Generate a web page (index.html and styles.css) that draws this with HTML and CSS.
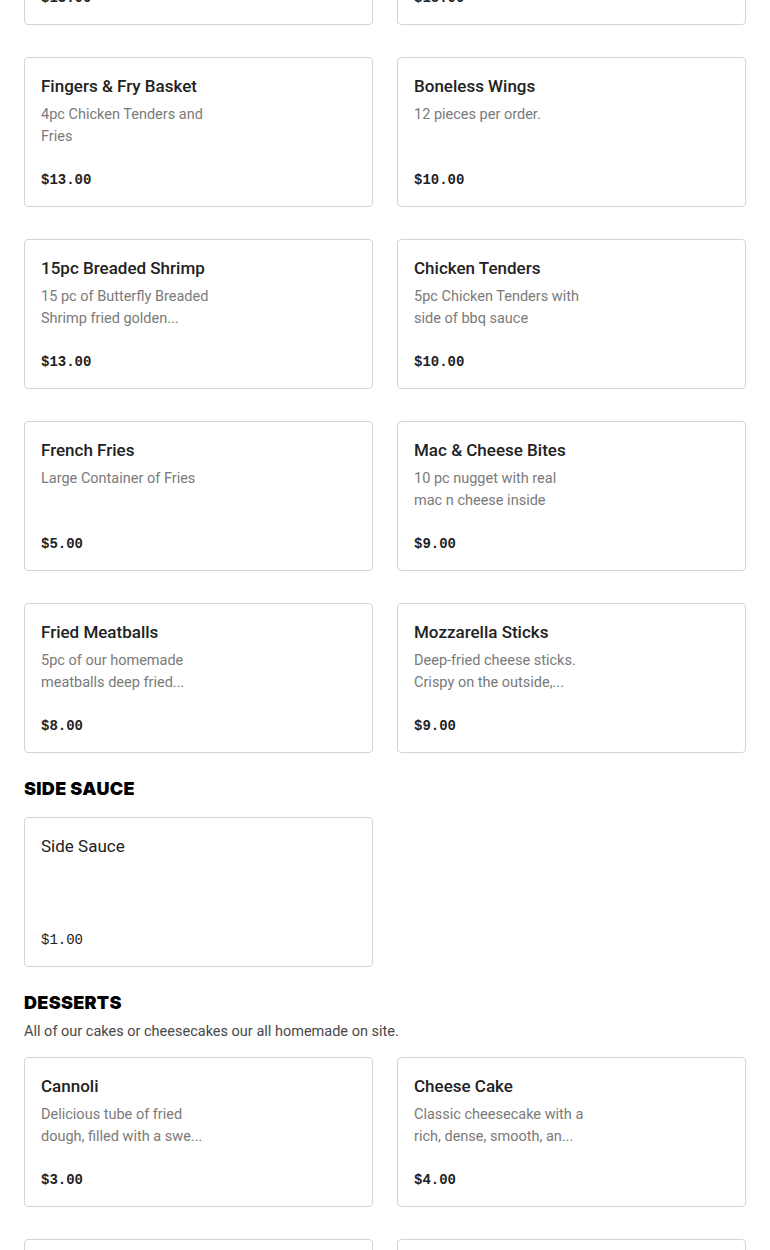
FILE: index.html
```html
<!DOCTYPE html>
<html lang="en">
<head>
<meta charset="utf-8">
<title>Menu</title>
<link rel="stylesheet" href="styles.css">
</head>
<body>
<main class="menu">
  <section class="section">
    <div class="grid">
      <article class="card">
        <h3 class="card-title">Chicken Wings</h3>
        <p class="card-desc">10 pieces per order with your choice of sauce.</p>
        <p class="card-price">$13.00</p>
      </article>
      <article class="card">
        <h3 class="card-title">Wings Basket</h3>
        <p class="card-desc">Wings and fries.</p>
        <p class="card-price">$15.00</p>
      </article>
      <article class="card">
        <h3 class="card-title">Fingers &amp; Fry Basket</h3>
        <p class="card-desc">4pc Chicken Tenders and Fries</p>
        <p class="card-price">$13.00</p>
      </article>
      <article class="card">
        <h3 class="card-title">Boneless Wings</h3>
        <p class="card-desc">12 pieces per order.</p>
        <p class="card-price">$10.00</p>
      </article>
      <article class="card">
        <h3 class="card-title">15pc Breaded Shrimp</h3>
        <p class="card-desc">15 pc of Butterfly Breaded Shrimp fried golden...</p>
        <p class="card-price">$13.00</p>
      </article>
      <article class="card">
        <h3 class="card-title">Chicken Tenders</h3>
        <p class="card-desc">5pc Chicken Tenders with side of bbq sauce</p>
        <p class="card-price">$10.00</p>
      </article>
      <article class="card">
        <h3 class="card-title">French Fries</h3>
        <p class="card-desc">Large Container of Fries</p>
        <p class="card-price">$5.00</p>
      </article>
      <article class="card">
        <h3 class="card-title">Mac &amp; Cheese Bites</h3>
        <p class="card-desc">10 pc nugget with real mac n cheese inside</p>
        <p class="card-price">$9.00</p>
      </article>
      <article class="card">
        <h3 class="card-title">Fried Meatballs</h3>
        <p class="card-desc">5pc of our homemade meatballs deep fried...</p>
        <p class="card-price">$8.00</p>
      </article>
      <article class="card">
        <h3 class="card-title">Mozzarella Sticks</h3>
        <p class="card-desc">Deep-fried cheese sticks. Crispy on the outside,...</p>
        <p class="card-price">$9.00</p>
      </article>
    </div>
  </section>

  <section class="section">
    <h2 class="section-title">SIDE SAUCE</h2>
    <div class="grid">
      <article class="card card-light">
        <h3 class="card-title">Side Sauce</h3>
        <p class="card-price">$1.00</p>
      </article>
    </div>
  </section>

  <section class="section">
    <h2 class="section-title">DESSERTS</h2>
    <p class="section-desc">All of our cakes or cheesecakes our all homemade on site.</p>
    <div class="grid">
      <article class="card">
        <h3 class="card-title">Cannoli</h3>
        <p class="card-desc">Delicious tube of fried dough, filled with a swe...</p>
        <p class="card-price">$3.00</p>
      </article>
      <article class="card">
        <h3 class="card-title">Cheese Cake</h3>
        <p class="card-desc">Classic cheesecake with a rich, dense, smooth, an...</p>
        <p class="card-price">$4.00</p>
      </article>
      <article class="card">
        <h3 class="card-title">Chocolate Cake</h3>
        <p class="card-desc">Rich chocolate layer cake.</p>
        <p class="card-price">$4.00</p>
      </article>
      <article class="card">
        <h3 class="card-title">Carrot Cake</h3>
        <p class="card-desc">Moist carrot cake with cream cheese frosting.</p>
        <p class="card-price">$4.00</p>
      </article>
    </div>
  </section>
</main>
</body>
</html>
```

FILE: styles.css
```css
* {
  box-sizing: border-box;
}

html, body {
  margin: 0;
  padding: 0;
  background: #ffffff;
}

body {
  font-family: Roboto, "Noto Sans", "Liberation Sans", sans-serif;
  color: #222222;
  overflow: hidden;
}

.menu {
  padding: 0 24px;
  margin-top: -125px;
}

.section {
  display: flex;
  flex-direction: column;
}

.section + .section {
  margin-top: 24px;
}

.section-title {
  margin: 0;
  font-family: Inter, "Liberation Sans", sans-serif;
  font-size: 18px;
  line-height: 24px;
  font-weight: 900;
  color: #000000;
  letter-spacing: 0.3px;
}

.section-desc {
  margin: 6px 0 0 0;
  font-size: 14.5px;
  line-height: 22px;
  color: #484848;
}

.section-title + .grid {
  margin-top: 16px;
}

.section-desc + .grid {
  margin-top: 14px;
}

.grid {
  display: grid;
  grid-template-columns: 1fr 1fr;
  column-gap: 24px;
  row-gap: 32px;
}

.card {
  height: 150px;
  border: 1px solid #d4d4d4;
  border-radius: 4px;
  padding: 16px;
  display: flex;
  flex-direction: column;
}

.card-title {
  margin: 0;
  font-size: 17px;
  line-height: 25px;
  font-weight: 500;
  color: #222222;
}

.card-light .card-title {
  font-weight: 400;
}

.card-desc {
  margin: 5px 0 0 0;
  max-width: 172px;
  font-size: 14.5px;
  line-height: 22px;
  color: #7a7a7a;
  display: -webkit-box;
  -webkit-line-clamp: 2;
  -webkit-box-orient: vertical;
  overflow: hidden;
}

.card-price {
  margin: auto 0 0 0;
  font-family: "Liberation Mono", "DejaVu Sans Mono", monospace;
  font-size: 14px;
  line-height: 20px;
  font-weight: 700;
  color: #222222;
}

.card-light .card-price {
  font-weight: 400;
}
```
